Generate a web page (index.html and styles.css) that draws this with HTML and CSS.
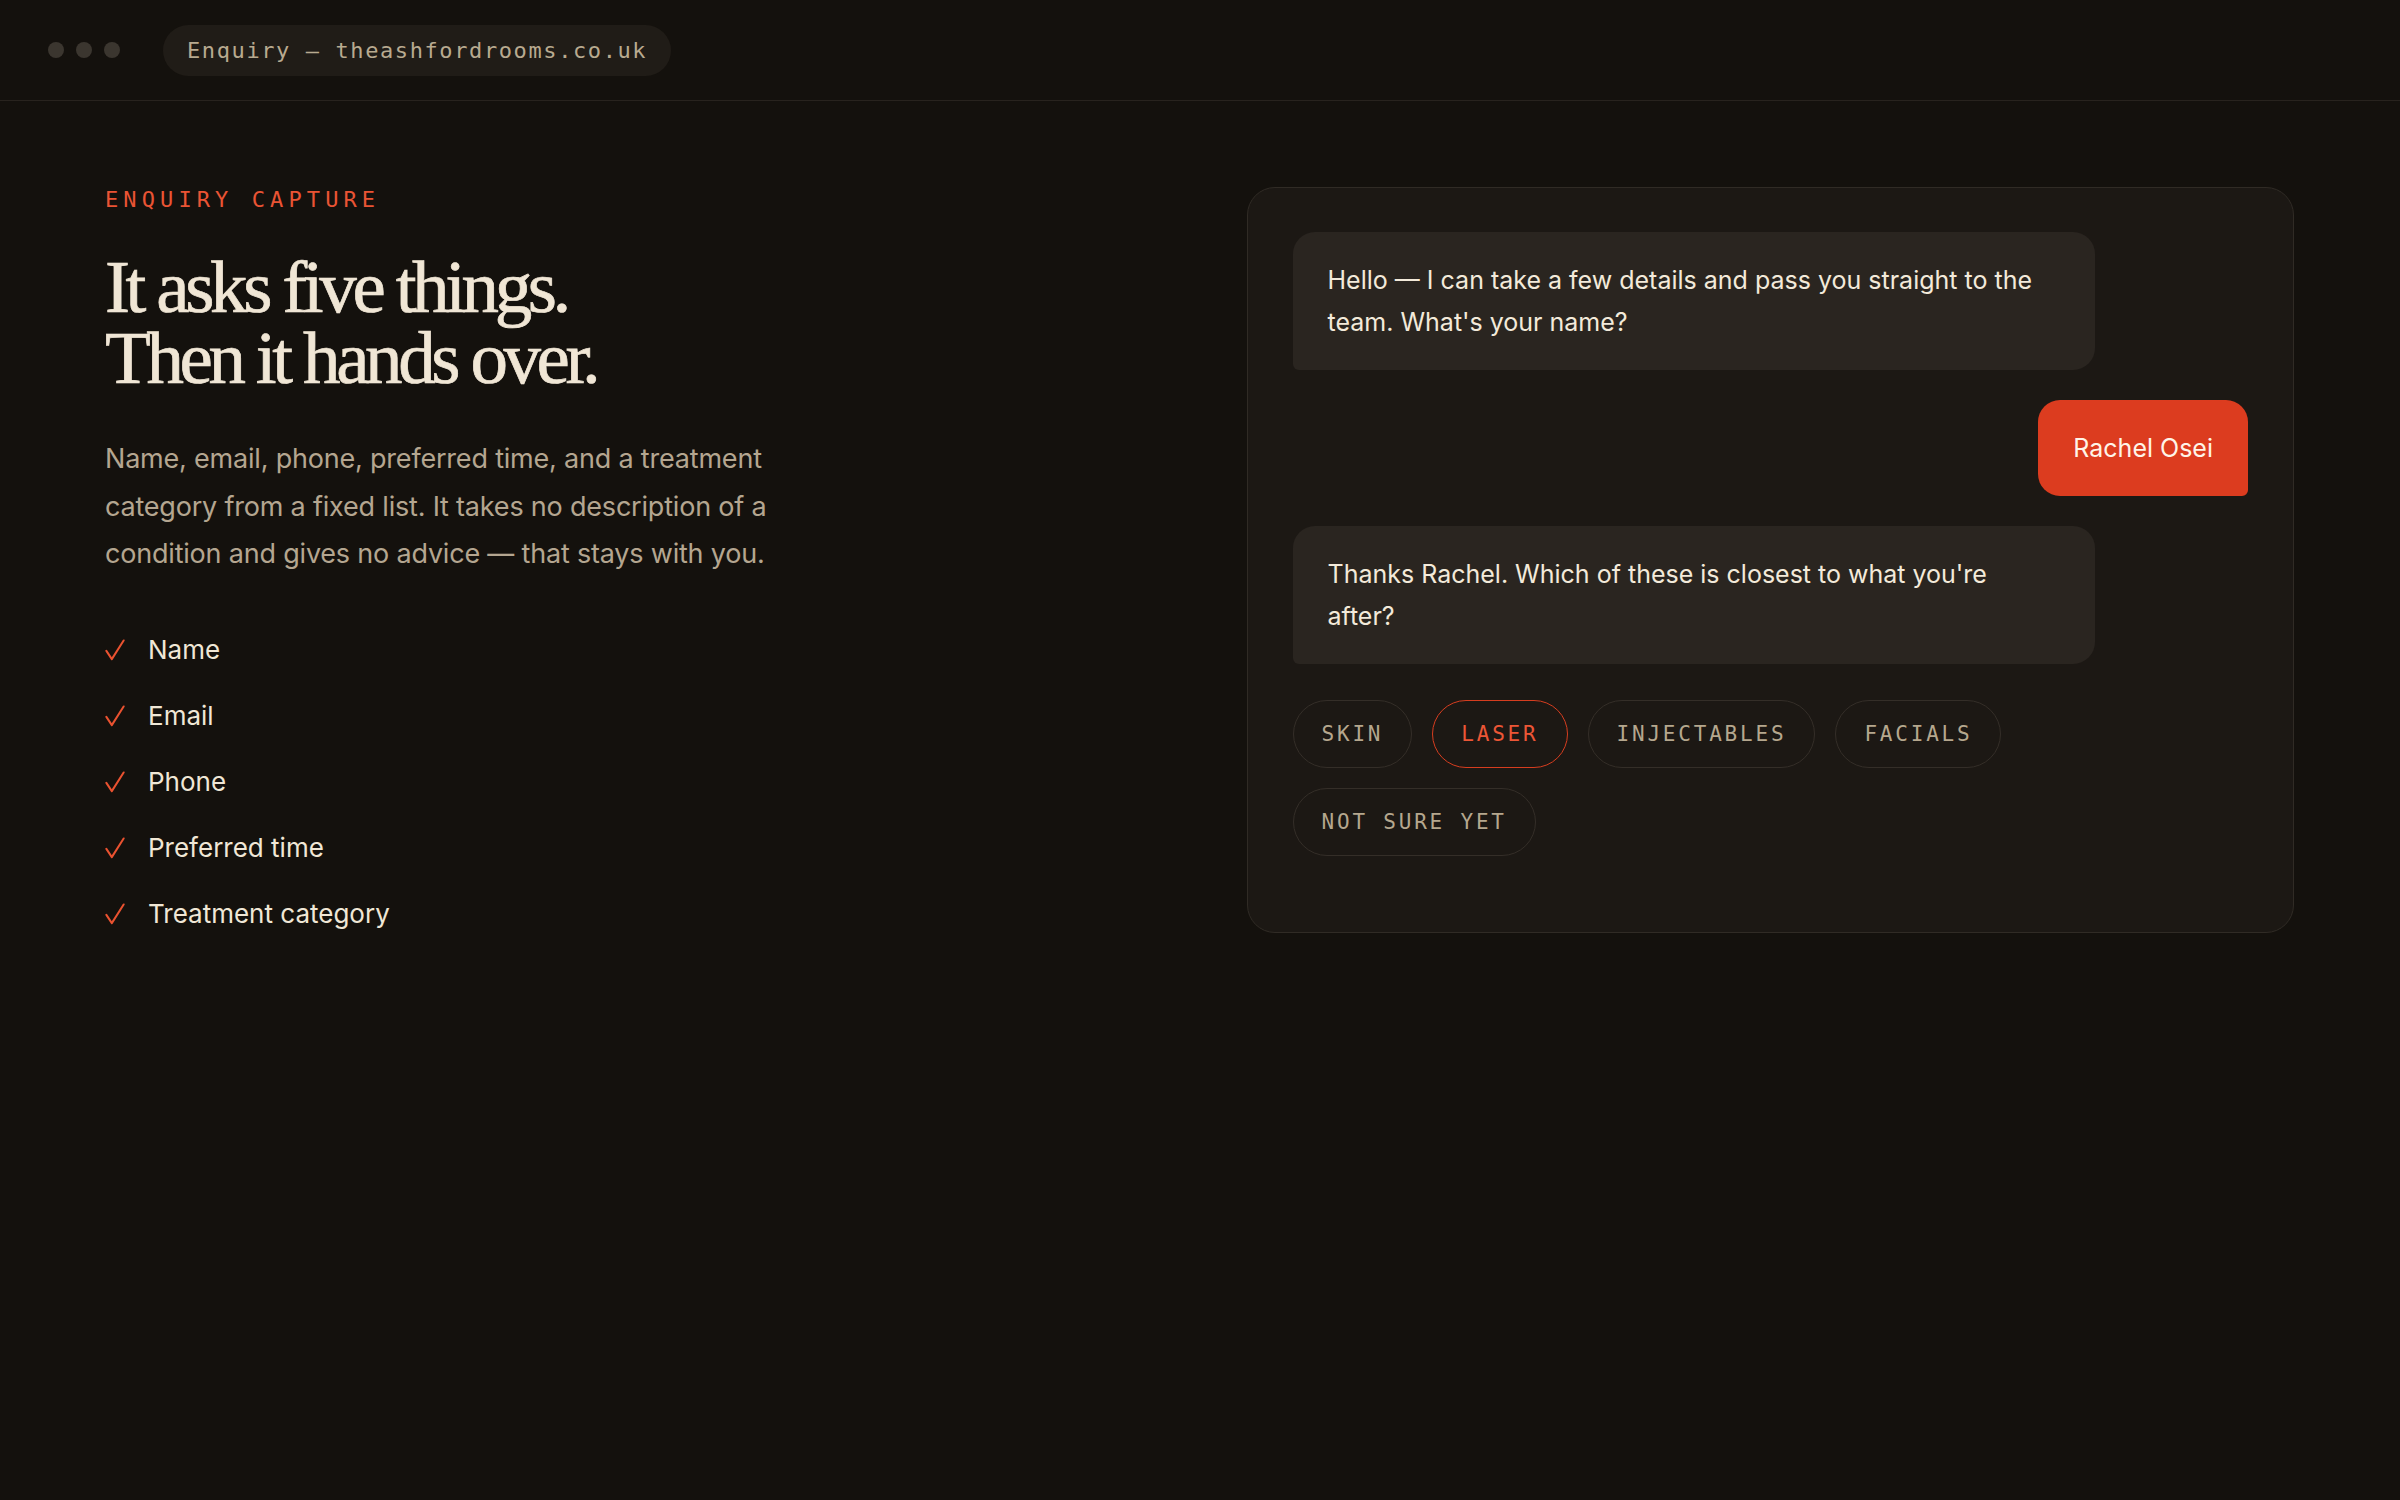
FILE: index.html
```html
<!DOCTYPE html>
<html lang="en">
<head>
<meta charset="utf-8">
<title>Enquiry — theashfordrooms.co.uk</title>
<link rel="stylesheet" href="styles.css">
</head>
<body>
<div class="Window">
  <div class="TopBar">
    <div class="Dots"><span></span><span></span><span></span></div>
    <div class="Address">Enquiry — theashfordrooms.co.uk</div>
  </div>

  <div class="Main">
    <div class="Intro">
      <div class="Eyebrow">ENQUIRY CAPTURE</div>
      <h1 class="Title"><span>It asks five things.</span><span>Then it hands over.</span></h1>
      <p class="Lede">Name, email, phone, preferred time, and a treatment category from a fixed list. It takes no description of a condition and gives no advice — that stays with you.</p>
      <ul class="Fields">
        <li><svg class="Tick" viewBox="0 0 22 24"><polyline points="1.5,13 7.5,22 20.5,1.5"/></svg>Name</li>
        <li><svg class="Tick" viewBox="0 0 22 24"><polyline points="1.5,13 7.5,22 20.5,1.5"/></svg>Email</li>
        <li><svg class="Tick" viewBox="0 0 22 24"><polyline points="1.5,13 7.5,22 20.5,1.5"/></svg>Phone</li>
        <li><svg class="Tick" viewBox="0 0 22 24"><polyline points="1.5,13 7.5,22 20.5,1.5"/></svg>Preferred time</li>
        <li><svg class="Tick" viewBox="0 0 22 24"><polyline points="1.5,13 7.5,22 20.5,1.5"/></svg>Treatment category</li>
      </ul>
    </div>

    <div class="Chat">
      <div class="Thread">
        <div class="Bubble Bot">Hello — I can take a few details and pass you straight to the team. What's your name?</div>
        <div class="Bubble User">Rachel Osei</div>
        <div class="Bubble Bot">Thanks Rachel. Which of these is closest to what you're after?</div>
      </div>
      <div class="Choices">
        <span class="Chip">SKIN</span>
        <span class="Chip Active">LASER</span>
        <span class="Chip">INJECTABLES</span>
        <span class="Chip">FACIALS</span>
        <span class="Chip">NOT SURE YET</span>
      </div>
    </div>
  </div>
</div>
</body>
</html>
```

FILE: styles.css
```css
html, body
{
    margin: 0;
    padding: 0;
    background: #14110d;
}

body
{
    width: 2400px;
    min-height: 1500px;
    font-family: "Inter", "Roboto", "Liberation Sans", sans-serif;
    color: #f0e7d6;
}

/* window chrome */

.TopBar
{
    height: 100px;
    display: flex;
    align-items: center;
    gap: 43px;
    padding-left: 48px;
    border-bottom: 1px solid #28231e;
}

.Dots
{
    display: flex;
    gap: 12px;
}

.Dots span
{
    width: 16px;
    height: 16px;
    border-radius: 50%;
    background: #3b362f;
}

.Address
{
    height: 51px;
    line-height: 51px;
    padding: 0 24px 0 24px;
    border-radius: 26px;
    background: #201c17;
    font-family: "DejaVu Sans Mono", "Liberation Mono", monospace;
    font-size: 22px;
    letter-spacing: 1.6px;
    color: #b8aa90;
}

/* two columns */

.Main
{
    display: grid;
    grid-template-columns: 1fr 1fr;
    gap: 94px;
    padding: 86px 106px 0 105px;
    align-items: start;
}

.Eyebrow
{
    font-family: "DejaVu Sans Mono", "Liberation Mono", monospace;
    font-size: 22px;
    line-height: 26px;
    letter-spacing: 5.1px;
    color: #ea5434;
}

.Title
{
    margin: 38px 0 0 0;
    font-family: "Liberation Serif", serif;
    font-weight: 400;
    font-size: 75px;
    line-height: 71px;
    letter-spacing: -4.4px;
    color: #f0e6d5;
    -webkit-text-stroke: 0.7px #f0e6d5;
}

.Title span
{
    display: block;
}

.Lede
{
    margin: 42px 0 0 0;
    max-width: 680px;
    font-size: 27px;
    line-height: 47.5px;
    letter-spacing: -0.2px;
    color: #b4a690;
}

.Fields
{
    list-style: none;
    margin: 55px 0 0 0;
    padding: 0;
    display: flex;
    flex-direction: column;
    gap: 32px;
}

.Fields li
{
    display: flex;
    align-items: center;
    font-size: 26px;
    line-height: 34px;
    color: #f0e7d6;
}

.Tick
{
    width: 20px;
    height: 22px;
    margin-right: 23px;
    fill: none;
    stroke: #ea5230;
    stroke-width: 2.2;
    stroke-linecap: round;
    stroke-linejoin: round;
}

/* chat card */

.Chat
{
    background: #1c1814;
    border: 1.5px solid #302b25;
    border-radius: 28px;
    padding: 44px 45px 76px 45px;
}

.Thread
{
    display: flex;
    flex-direction: column;
    align-items: flex-start;
    gap: 30px;
}

.Bubble
{
    max-width: 84%;
    box-sizing: border-box;
    padding: 27px 40px 27px 35px;
    font-size: 25px;
    line-height: 42px;
    letter-spacing: 0;
}

.Bubble.Bot
{
    background: #2a2520;
    color: #f3eada;
    border-radius: 22px 22px 22px 6px;
}

.Bubble.User
{
    align-self: flex-end;
    padding-right: 35px;
    background: #dc3c1f;
    color: #fff4e8;
    border-radius: 22px 22px 6px 22px;
}

.Choices
{
    display: flex;
    flex-wrap: wrap;
    gap: 20px 20px;
    margin-top: 36px;
}

.Chip
{
    padding: 20px 28px;
    border: 1.5px solid #342e28;
    border-radius: 40px;
    font-family: "DejaVu Sans Mono", "Liberation Mono", monospace;
    font-size: 21px;
    line-height: 26px;
    letter-spacing: 2.8px;
    color: #b5a78e;
}

.Chip.Active
{
    border-color: #d63d1f;
    color: #ec5636;
}
```
